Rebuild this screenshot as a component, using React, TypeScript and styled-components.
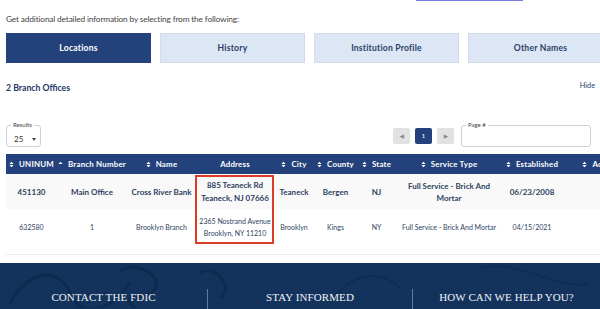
import styled, { createGlobalStyle } from 'styled-components';

const GlobalStyle = createGlobalStyle`
  html, body {
    margin: 0;
    padding: 0;
    background: #ffffff;
    overflow: hidden;
  }
  body {
    font-family: Lato, 'Open Sans', sans-serif;
    color: #333;
  }
`;

const Page = styled.div`
  width: 600px;
  height: 309px;
  overflow: hidden;
  display: flex;
  flex-direction: column;
`;
const TopBar = styled.div`
  height: 2px;
  display: flex;
`;
const LinkRule = styled.span`
  margin-left: 416px;
  width: 107px;
  height: 1px;
  background: #7b7be6;
`;
const Content = styled.div`
  padding: 0 0 0 6px;
  display: flex;
  flex-direction: column;
`;
const Intro = styled.div`
  margin-top: 11px;
  font-size: 8.3px;
  letter-spacing: -0.15px;
  line-height: 12px;
  color: #444;
`;
const Tabs = styled.div`
  margin-top: 8px;
  display: flex;
  gap: 9px;
`;
const Tab = styled.div<{ $active?: boolean }>`
  flex: 0 0 145px;
  height: 30px;
  box-sizing: border-box;
  display: flex;
  align-items: center;
  justify-content: center;
  font-size: 8.6px;
  font-weight: 700;
  letter-spacing: 0.2px;
  background: ${(p) => (p.$active ? '#23417a' : '#dce6f4')};
  color: ${(p) => (p.$active ? '#ffffff' : '#2a3f66')};
  border: 1px solid ${(p) => (p.$active ? '#23417a' : '#d2dcea')};
`;
const SectionRow = styled.div`
  margin-top: 19px;
  display: flex;
  justify-content: space-between;
  align-items: center;
  padding-right: 5px;
`;
const SectionTitle = styled.div`
  font-size: 8.7px;
  font-weight: 700;
  color: #1f3767;
`;
const HideLink = styled.div`
  font-size: 7.3px;
  color: #2a3f66;
  margin-top: -4px;
`;
const Controls = styled.div`
  margin-top: 32px;
  display: flex;
  align-items: center;
  padding-right: 9px;
`;
const Field = styled.div<{ $w: number }>`
  position: relative;
  width: ${(p) => p.$w}px;
  height: 22px;
  box-sizing: border-box;
  border: 1px solid #c9d1dc;
  border-radius: 3px;
  display: flex;
  align-items: center;
  padding: 6px 0 0 7px;
  font-size: 8px;
  color: #333;
`;
const FieldLabel = styled.span`
  position: absolute;
  top: -5px;
  left: 4px;
  padding: 0 2px;
  background: #fff;
  font-size: 6px;
  line-height: 8px;
  color: #444;
`;
const Caret = styled.span`
  margin-left: 9px;
  width: 0;
  height: 0;
  border-left: 2.5px solid transparent;
  border-right: 2.5px solid transparent;
  border-top: 3px solid #444;
`;
const Spacer = styled.div`
  flex: 1;
`;
const Pager = styled.div`
  display: flex;
  gap: 5px;
  margin-right: 7px;
`;
const PageButton = styled.div<{ $active?: boolean }>`
  width: 17px;
  height: 16px;
  border-radius: 2px;
  display: flex;
  align-items: center;
  justify-content: center;
  font-size: 5px;
  font-weight: 700;
  background: ${(p) => (p.$active ? '#23417a' : '#e2e2e2')};
  color: ${(p) => (p.$active ? '#ffffff' : '#888')};
`;
const TableWrap = styled.div`
  margin-top: 7px;
  width: 640px;
`;
const Table = styled.table`
  border-collapse: collapse;
  table-layout: fixed;
  width: 640px;
`;
const Th = styled.th`
  background: #23417a;
  color: #ffffff;
  font-size: 7.9px;
  font-weight: 700;
  height: 20px;
  padding: 0;
  white-space: nowrap;
  text-align: center;
  letter-spacing: 0.2px;
`;
const Row = styled.tr<{ $shade?: boolean; $bold?: boolean }>`
  background: ${(p) => (p.$shade ? '#f9f9f9' : '#ffffff')};
  font-weight: ${(p) => (p.$bold ? 700 : 400)};
  font-size: ${(p) => (p.$bold ? '8px' : '7px')};
  color: #2d3f5f;
`;
const Td = styled.td<{ $h: number; $lift?: number }>`
  box-sizing: border-box;
  height: ${(p) => p.$h}px;
  padding: 0 1px ${(p) => p.$lift || 0}px;
  line-height: 12px;
  text-align: center;
  vertical-align: middle;
  white-space: nowrap;
`;
const WrapTd = styled(Td)`
  white-space: normal;
`;
const AddressTd = styled(Td)`
  position: relative;
`;
const Highlight = styled.div<{ $top?: boolean }>`
  position: absolute;
  left: -1px;
  right: 0;
  top: ${(p) => (p.$top ? '1px' : '0')};
  bottom: ${(p) => (p.$top ? '0' : '9px')};
  border-style: solid;
  border-color: #dc3b26;
  border-width: ${(p) => (p.$top ? '2px 2px 0 2px' : '0 2px 2px 2px')};
  pointer-events: none;
`;
const Line = styled.div<{ $lh: number }>`
  line-height: ${(p) => p.$lh}px;
`;
const Rule = styled.div`
  height: 1px;
  background: #eeeeee;
  margin-top: 1px;
`;
const Footer = styled.footer`
  margin-top: 8px;
  flex: 1;
  position: relative;
  overflow: hidden;
  background: #14335c;
  display: grid;
  grid-template-columns: 207px 205px 1fr;
  padding-top: 26px;
`;
const Swirls = styled.svg`
  position: absolute;
  inset: 0;
  pointer-events: none;
`;
const FooterCol = styled.div<{ $divider?: boolean }>`
  position: relative;
  text-align: center;
  font-family: 'Liberation Serif', 'DejaVu Serif', serif;
  font-size: 11px;
  color: #eef2f8;
  letter-spacing: 0.1px;
  border-left: ${(p) => (p.$divider ? '1px solid rgba(255,255,255,0.35)' : 'none')};
  padding-top: 2px;
`;

const SortIcon = ({ up }: { up?: boolean }) => (
  <svg width="5" height="7" viewBox="0 0 6 8" style={{ marginRight: 5, verticalAlign: '-1px' }}>
    <path d="M0.5 3.4 L3 0.6 L5.5 3.4 Z" fill="#fff" />
    {!up && <path d="M0.5 4.6 L3 7.4 L5.5 4.6 Z" fill="#fff" />}
  </svg>
);

const columns = [
  { label: 'UNINUM', w: 51, sort: 'both' },
  { label: 'Branch Number', w: 70, sort: 'up' },
  { label: 'Name', w: 69, sort: 'both' },
  { label: 'Address', w: 78, sort: '' },
  { label: 'City', w: 40, sort: 'both' },
  { label: 'County', w: 43, sort: 'both' },
  { label: 'State', w: 39, sort: 'both' },
  { label: 'Service Type', w: 106, sort: 'both' },
  { label: 'Established', w: 60, sort: 'both' },
  { label: 'Acquired', w: 84, sort: 'both' },
];

const App = () => {
  return (
    <Page>
      <GlobalStyle />
      <TopBar>
        <LinkRule />
      </TopBar>
      <Content>
        <Intro>Get additional detailed information by selecting from the following:</Intro>
        <Tabs>
          <Tab $active>Locations</Tab>
          <Tab>History</Tab>
          <Tab>Institution Profile</Tab>
          <Tab>Other Names</Tab>
        </Tabs>
        <SectionRow>
          <SectionTitle>2 Branch Offices</SectionTitle>
          <HideLink>Hide</HideLink>
        </SectionRow>
        <Controls>
          <Field $w={35}>
            <FieldLabel>Results</FieldLabel>
            25
            <Caret />
          </Field>
          <Spacer />
          <Pager>
            <PageButton>&#9664;</PageButton>
            <PageButton $active>1</PageButton>
            <PageButton>&#9654;</PageButton>
          </Pager>
          <Field $w={130}>
            <FieldLabel>Page #</FieldLabel>
          </Field>
        </Controls>
        <TableWrap>
          <Table>
            <colgroup>
              {columns.map((c) => (
                <col key={c.label} style={{ width: c.w }} />
              ))}
            </colgroup>
            <thead>
              <tr>
                {columns.map((c) => (
                  <Th key={c.label}>
                    {c.sort && <SortIcon up={c.sort === 'up'} />}
                    {c.label}
                  </Th>
                ))}
              </tr>
            </thead>
            <tbody>
              <Row $shade $bold>
                <Td $h={35}>451130</Td>
                <Td $h={35}>Main Office</Td>
                <Td $h={35}>Cross River Bank</Td>
                <AddressTd $h={35}>
                  <Highlight $top />
                  <Line $lh={13}>885 Teaneck Rd</Line>
                  <Line $lh={13}>Teaneck, NJ 07666</Line>
                </AddressTd>
                <Td $h={35}>Teaneck</Td>
                <Td $h={35}>Bergen</Td>
                <Td $h={35}>NJ</Td>
                <WrapTd $h={35}>
                  Full Service - Brick And
                  <br />
                  Mortar
                </WrapTd>
                <Td $h={35}>06/23/2008</Td>
                <Td $h={35}></Td>
              </Row>
              <Row>
                <Td $h={44} $lift={9}>632580</Td>
                <Td $h={44} $lift={9}>1</Td>
                <Td $h={44} $lift={9}>Brooklyn Branch</Td>
                <AddressTd $h={44} $lift={9}>
                  <Highlight />
                  <Line $lh={12}>2365 Nostrand Avenue</Line>
                  <Line $lh={12}>Brooklyn, NY 11210</Line>
                </AddressTd>
                <Td $h={44} $lift={9}>Brooklyn</Td>
                <Td $h={44} $lift={9}>Kings</Td>
                <Td $h={44} $lift={9}>NY</Td>
                <Td $h={44} $lift={9}>Full Service - Brick And Mortar</Td>
                <Td $h={44} $lift={9}>04/15/2021</Td>
                <Td $h={44} $lift={9}></Td>
              </Row>
            </tbody>
          </Table>
          <Rule />
        </TableWrap>
      </Content>
      <Footer>
        <Swirls viewBox="0 0 600 45" preserveAspectRatio="none">
          <path d="M10 40 C 30 5, 60 5, 70 30 S 110 50, 130 20" stroke="#0f2a4f" strokeWidth="3" fill="none" />
          <path d="M120 8 C 140 -5, 170 20, 150 30 S 120 30, 135 45" stroke="#0f2a4f" strokeWidth="3" fill="none" />
          <path d="M200 10 C 215 0, 235 25, 220 35" stroke="#10294d" strokeWidth="2.5" fill="none" />
          <path d="M330 40 C 350 10, 380 5, 400 25" stroke="#112c52" strokeWidth="2" fill="none" />
          <path d="M480 5 C 520 -5, 560 30, 590 20" stroke="#112c52" strokeWidth="2" fill="none" />
        </Swirls>
        <FooterCol>CONTACT THE FDIC</FooterCol>
        <FooterCol $divider>STAY INFORMED</FooterCol>
        <FooterCol $divider>HOW CAN WE HELP YOU?</FooterCol>
      </Footer>
    </Page>
  );
};

export default App;
